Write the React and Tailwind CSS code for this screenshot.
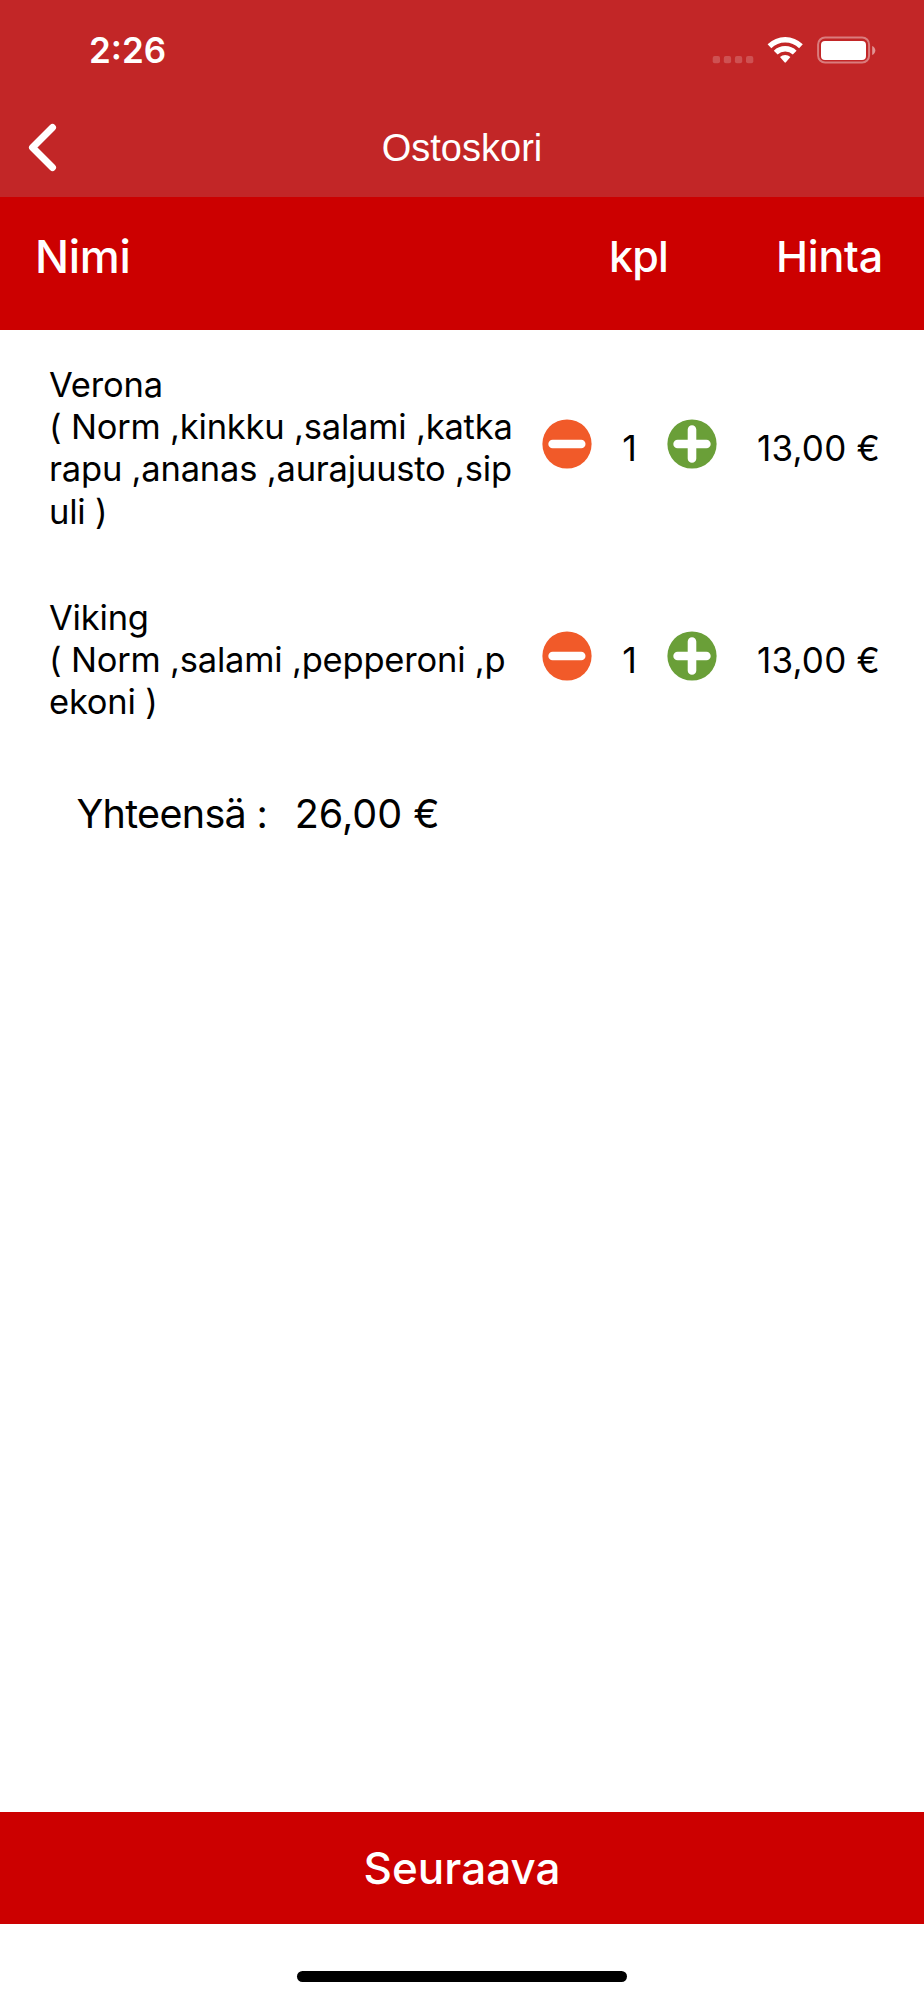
import React from "react";

const cartItems = [
  {
    id: 1,
    name: "Verona",
    lines: ["( Norm ,kinkku ,salami ,katka", "rapu ,ananas ,aurajuusto ,sip", "uli )"],
    count: 1,
    price: "13,00 €",
  },
  {
    id: 2,
    name: "Viking",
    lines: ["( Norm ,salami ,pepperoni ,p", "ekoni )"],
    count: 1,
    price: "13,00 €",
  },
];

const StatusIcons = () => (
  <svg width="164" height="30" viewBox="0 0 164 30" fill="none">
    {/* no signal dots */}
    <g fill="#fff" fillOpacity="0.2">
      <rect x="0.7" y="20" width="7.3" height="7.3" rx="2" />
      <rect x="11.8" y="20" width="7.3" height="7.3" rx="2" />
      <rect x="22.9" y="20" width="7.3" height="7.3" rx="2" />
      <rect x="34" y="20" width="7.3" height="7.3" rx="2" />
    </g>
    {/* wifi */}
    <g fill="#fff">
      <path d="M55.6 8.2 A25.2 25.2 0 0 1 90.8 8.2 L87.1 12.2 A20 20 0 0 0 59.3 12.2 Z" />
      <path d="M61.8 14.7 A16.4 16.4 0 0 1 84.6 14.7 L80.8 18.6 A11 11 0 0 0 65.6 18.6 Z" />
      <path d="M68 21.1 A7.5 7.5 0 0 1 78.4 21.1 L73.9 26.3 Q73.2 27 72.5 26.3 Z" />
    </g>
    {/* battery */}
    <rect x="106.1" y="1.4" width="51" height="25.2" rx="7" stroke="#fff" strokeOpacity="0.4" strokeWidth="2" />
    <rect x="109" y="5" width="45" height="19" rx="4" fill="#fff" />
    <path d="M160.2 10 C164.4 11.8 164.4 17.2 160.2 19 Z" fill="#fff" fillOpacity="0.5" />
  </svg>
);

const MinusIcon = () => (
  <svg width="50" height="50" viewBox="0 0 50 50">
    <circle cx="25" cy="25" r="24.6" fill="#f15a29" />
    <path d="M10.6 25 H39.2" stroke="#fff" strokeWidth="8.6" strokeLinecap="round" />
  </svg>
);

const PlusIcon = () => (
  <svg width="50" height="50" viewBox="0 0 50 50">
    <circle cx="25" cy="25" r="24.6" fill="#6a9f38" />
    <path d="M10.6 25 H39.4 M25 10.6 V39.4" stroke="#fff" strokeWidth="8.6" strokeLinecap="round" />
  </svg>
);

const CartRow = ({ item }) => (
  <div className="flex items-center pl-[49px] text-[34.5px] leading-[42.33px]">
    <div className="w-[493px] shrink-0 whitespace-nowrap tracking-[-0.2px]">
      <p>{item.name}</p>
      {item.lines.map((line) => (
        <p key={line}>{line}</p>
      ))}
    </div>
    <button className="-mt-[8px]">
      <MinusIcon />
    </button>
    <span className="w-[75px] text-center text-[36px]">{item.count}</span>
    <button className="-mt-[8px]">
      <PlusIcon />
    </button>
    <span className="ml-[40px] whitespace-nowrap text-[35px] tracking-[0.2px]">{item.price}</span>
  </div>
);

const App = () => {
  return (
    <div className="flex h-[2000px] w-[924px] flex-col overflow-hidden bg-white font-['Inter',sans-serif] text-black">
      <header className="h-[197px] bg-[#c22627] text-white">
        <div className="flex h-[123px] items-start justify-between pr-[48px] pl-[89px]">
          <span className="mt-[29px] text-[35px] leading-[42px] font-semibold">2:26</span>
          <div className="mt-[36px]">
            <StatusIcons />
          </div>
        </div>
        <div className="grid grid-cols-[200px_1fr_200px] items-center">
          <button className="pl-[28px]">
            <svg width="30" height="50" viewBox="0 0 30 50" fill="none">
              <path d="M24.5 4.5 L4.5 24.5 L24.5 44.5" stroke="#fff" strokeWidth="7" strokeLinecap="round" strokeLinejoin="round" />
            </svg>
          </button>
          <h1 className="text-center font-['Liberation_Sans',sans-serif] text-[38px] leading-[46px]">
            Ostoskori
          </h1>
        </div>
      </header>

      <div className="flex h-[133px] bg-[#cc0000] pt-[33px] pl-[35px] leading-[54px] font-medium text-white">
        <span className="w-[574px] text-[45px] tracking-[-0.3px]">Nimi</span>
        <span className="-mt-px w-[167px] text-[43px] tracking-[-0.8px]">kpl</span>
        <span className="-mt-px text-[43px] tracking-[-0.2px]">Hinta</span>
      </div>

      <main className="flex flex-1 flex-col gap-[63.5px] pt-[33.7px]">
        {cartItems.map((item) => (
          <CartRow key={item.id} item={item} />
        ))}
        <div className="-mt-px flex gap-[27.5px] pl-[76.5px] text-[39.5px] leading-[56px]">
          <span className="tracking-[-0.7px]">Yhteensä :</span>
          <span>26,00 €</span>
        </div>
      </main>

      <button className="h-[112px] bg-[#cc0000] text-[44px] font-medium text-white">
        Seuraava
      </button>
      <div className="flex h-[76px] justify-center pt-[47px]">
        <div className="h-[11px] w-[330px] rounded-full bg-black" />
      </div>
    </div>
  );
};

export default App;
